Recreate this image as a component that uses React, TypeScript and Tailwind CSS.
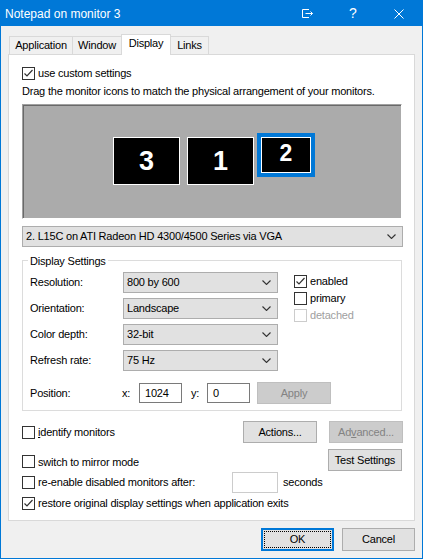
import React from "react";

const font = "font-['Liberation_Sans',Arial,sans-serif]";

const Check = ({ checked, disabled }: { checked?: boolean; disabled?: boolean }) => (
  <span
    className={
      disabled
        ? "w-[13px] h-[13px] border border-[#cccccc] bg-white flex items-center justify-center shrink-0"
        : "w-[13px] h-[13px] border border-[#333333] bg-white flex items-center justify-center shrink-0"
    }
  >
    {checked && (
      <svg width="11" height="11" viewBox="0 0 11 11">
        <path d="M1.5 5.5 L4 8 L9.5 2" fill="none" stroke="#333333" strokeWidth="1.2" />
      </svg>
    )}
  </span>
);

const Chevron = () => (
  <svg width="9" height="5" viewBox="0 0 9 5" className="shrink-0">
    <path d="M0.5 0.5 L4.5 4.5 L8.5 0.5" fill="none" stroke="#333333" strokeWidth="1.1" />
  </svg>
);

const Combo = ({ value, className }: { value: string; className: string }) => (
  <div
    className={`h-[21px] border border-[#adadad] bg-[#e1e1e1] flex items-center justify-between pl-[3px] pr-[6px] ${className}`}
  >
    <span>{value}</span>
    <Chevron />
  </div>
);

const Btn = ({ label, disabled, className }: { label: React.ReactNode; disabled?: boolean; className: string }) => (
  <div
    className={
      disabled
        ? `h-[22px] w-[74px] border border-[#bfbfbf] bg-[#cccccc] text-[#838383] flex items-center justify-center ${className}`
        : `h-[22px] w-[74px] border border-[#adadad] bg-[#e1e1e1] flex items-center justify-center ${className}`
    }
  >
    {label}
  </div>
);

export default function App() {
  return (
    <div
      className={`w-[423px] h-[559px] border border-[#0078d7] bg-[#f0f0f0] flex flex-col text-[11px] tracking-[-0.2px] text-black ${font}`}
    >
      {/* title bar */}
      <div className="h-[25px] bg-[#0078d7] flex items-center text-white shrink-0 tracking-normal">
        <span className="pl-[4px] pt-[1px] text-[12px]">Notepad on monitor 3</span>
        <div className="ml-auto flex h-full">
          <div className="w-[46px] flex items-center justify-center">
            <svg width="13" height="11" viewBox="0 0 13 11">
              <path d="M8 1.5 H1.5 V9.5 H8" fill="none" stroke="white" strokeWidth="1" />
              <path d="M4.5 5.5 H11.5 M9.5 3.5 L11.5 5.5 L9.5 7.5" fill="none" stroke="white" strokeWidth="1" />
            </svg>
          </div>
          <div className="w-[46px] flex items-center justify-center text-[14px]">?</div>
          <div className="w-[46px] flex items-center justify-center">
            <svg width="10" height="10" viewBox="0 0 10 10">
              <path d="M0.5 0.5 L9.5 9.5 M9.5 0.5 L0.5 9.5" stroke="white" strokeWidth="1" />
            </svg>
          </div>
        </div>
      </div>

      {/* tabs */}
      <div className="flex items-end h-[21px] mt-[7px] ml-[8px] shrink-0">
        <div className="h-[18px] w-[64px] border border-b-0 border-[#d9d9d9] flex items-center justify-center">
          Application
        </div>
        <div className="h-[18px] w-[50px] -ml-px border border-b-0 border-[#d9d9d9] flex items-center justify-center">
          Window
        </div>
        <div className="relative z-10 h-[21px] w-[50px] -ml-px -mb-px border border-b-0 border-[#d9d9d9] bg-white flex items-center justify-center pb-[3px]">
          Display
        </div>
        <div className="h-[18px] w-[39px] -ml-px border border-b-0 border-[#d9d9d9] flex items-center justify-center">
          Links
        </div>
      </div>

      {/* panel */}
      <div className="mx-[7px] h-[467px] border border-[#d9d9d9] bg-white pl-[13px] pr-[11px] flex flex-col shrink-0">
        <label className="mt-[11px] h-[15px] flex items-center gap-[3px]">
          <Check checked />
          <span>use custom settings</span>
        </label>
        <div className="mt-[3px] h-[15px] flex items-center">
          Drag the monitor icons to match the physical arrangement of your monitors.
        </div>

        {/* monitor arrangement */}
        <div className="relative mt-[5px] h-[115px] w-[380px] bg-[#ababab] border border-t-[#a0a0a0] border-l-[#a0a0a0] border-b-white border-r-white shadow-[inset_1px_1px_0_#696969] tracking-normal">
          <div className="absolute left-[90px] top-[32px] w-[67px] h-[48px] bg-black border border-white flex items-center justify-center text-white text-[27px] font-bold">
            3
          </div>
          <div className="absolute left-[164px] top-[32px] w-[67px] h-[48px] bg-black border border-white flex items-center justify-center text-white text-[27px] font-bold">
            1
          </div>
          <div className="absolute left-[234px] top-[28px] w-[58px] h-[44px] border-4 border-[#0078d7]">
            <div className="w-full h-full bg-black border border-white flex items-center justify-center text-white text-[23px] font-bold pb-[3px]">
              2
            </div>
          </div>
        </div>

        <Combo value="2. L15C on ATI Radeon HD 4300/4500 Series via VGA" className="mt-[7px] w-[381px]" />

        {/* display settings group */}
        <div className="relative mt-[13px] h-[151px] w-[380px] border border-[#dcdcdc] pl-[7px] pt-[11px]">
          <span className="absolute left-[5px] -top-[8px] bg-white px-[2px]">Display Settings</span>
          <div className="flex">
            <div className="flex flex-col gap-[5px]">
              {[
                ["Resolution:", "800 by 600"],
                ["Orientation:", "Landscape"],
                ["Color depth:", "32-bit"],
                ["Refresh rate:", "75 Hz"],
              ].map(([label, value]) => (
                <div key={label} className="flex items-center">
                  <span className="w-[93px]">{label}</span>
                  <Combo value={value} className="w-[155px]" />
                </div>
              ))}
            </div>
            <div className="ml-[16px] mt-[3px] flex flex-col gap-[4px]">
              <label className="h-[13px] flex items-center gap-[3px]">
                <Check checked />
                <span>enabled</span>
              </label>
              <label className="h-[13px] flex items-center gap-[3px]">
                <Check />
                <span>primary</span>
              </label>
              <label className="h-[13px] flex items-center gap-[3px] text-[#a0a0a0]">
                <Check disabled />
                <span>detached</span>
              </label>
            </div>
          </div>
          <div className="mt-[11px] flex items-center">
            <span className="w-[92px]">Position:</span>
            <span className="w-[17px]">x:</span>
            <div className="w-[43px] h-[20px] border border-[#7a7a7a] flex items-center pl-[5px]">1024</div>
            <span className="w-[16px] ml-[9px]">y:</span>
            <div className="w-[43px] h-[20px] border border-[#7a7a7a] flex items-center pl-[5px]">0</div>
            <Btn label="Apply" disabled className="ml-[7px] h-[21px]" />
          </div>
        </div>

        {/* bottom options */}
        <div className="mt-[10px] h-[22px] flex items-center">
          <label className="flex items-center gap-[3px]">
            <Check />
            <span>
              <span className="underline">i</span>dentify monitors
            </span>
          </label>
          <Btn label="Actions..." className="ml-auto" />
          <Btn
            label={
              <span>
                Ad<span className="underline">v</span>anced...
              </span>
            }
            disabled
            className="ml-[12px]"
          />
        </div>
        <div className="mt-[6px] h-[22px] flex items-end">
          <label className="mb-[1px] flex items-center gap-[3px]">
            <Check />
            <span>switch to mirror mode</span>
          </label>
          <Btn label="Test Settings" className="ml-auto mr-[1px]" />
        </div>
        <div className="mt-[1px] h-[21px] flex items-center">
          <label className="flex items-center gap-[3px] w-[210px]">
            <Check />
            <span>re-enable disabled monitors after:</span>
          </label>
          <div className="w-[46px] h-[21px] border border-[#cccccc] bg-white" />
          <span className="ml-[5px]">seconds</span>
        </div>
        <label className="mt-[3px] h-[15px] flex items-center gap-[3px]">
          <Check checked />
          <span>restore original display settings when application exits</span>
        </label>
      </div>

      {/* dialog buttons */}
      <div className="mt-[7px] pr-[7px] flex justify-end gap-[8px]">
        <div className="w-[73px] h-[23px] border-2 border-[#0078d7] bg-[#e1e1e1] p-[1px]">
          <div className="w-full h-full border border-dotted border-black flex items-center justify-center">OK</div>
        </div>
        <div className="w-[73px] h-[23px] border border-[#adadad] bg-[#e1e1e1] flex items-center justify-center">
          Cancel
        </div>
      </div>
    </div>
  );
}
